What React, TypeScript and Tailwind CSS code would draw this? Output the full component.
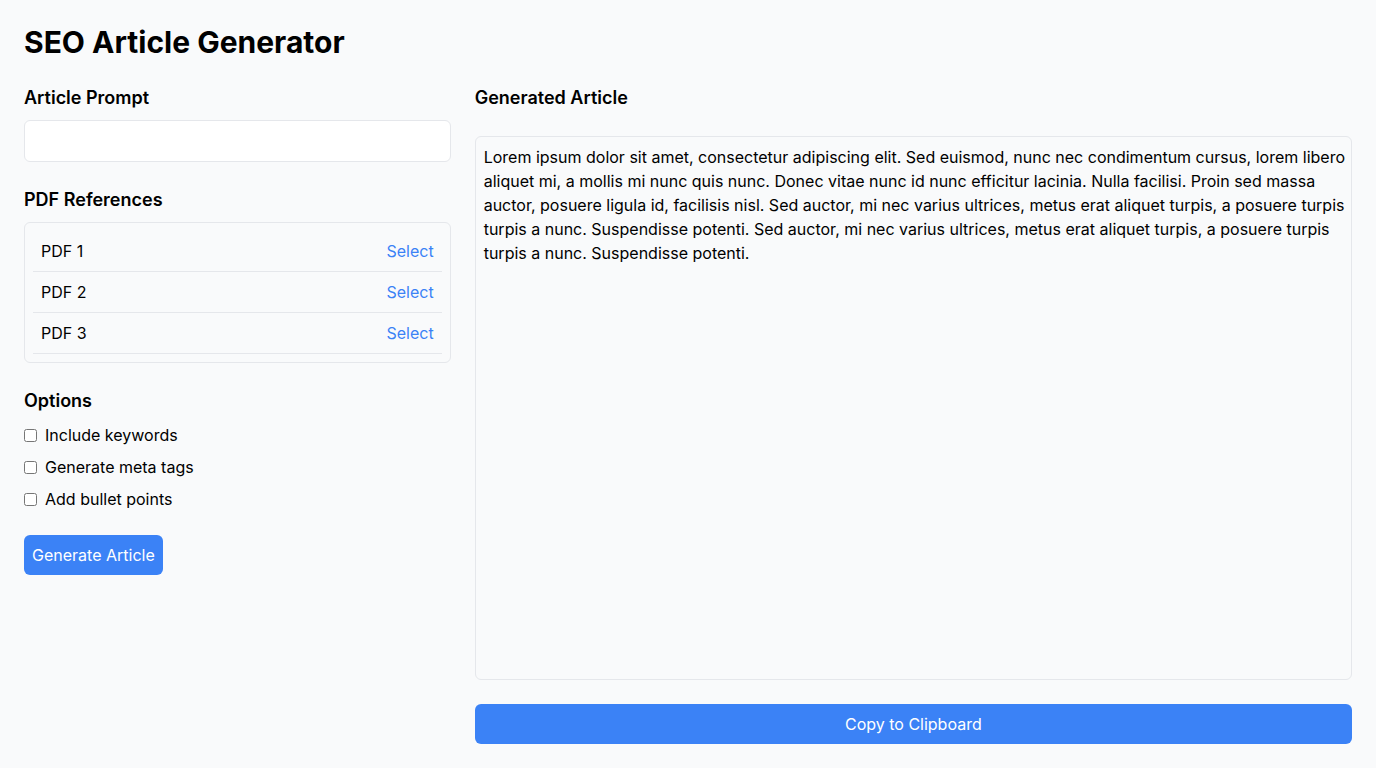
import { useState } from 'react'

const article =
  'Lorem ipsum dolor sit amet, consectetur adipiscing elit. Sed euismod, nunc nec condimentum cursus, lorem libero aliquet mi, a mollis mi nunc quis nunc. Donec vitae nunc id nunc efficitur lacinia. Nulla facilisi. Proin sed massa auctor, posuere ligula id, facilisis nisl. Sed auctor, mi nec varius ultrices, metus erat aliquet turpis, a posuere turpis turpis a nunc. Suspendisse potenti. Sed auctor, mi nec varius ultrices, metus erat aliquet turpis, a posuere turpis turpis a nunc. Suspendisse potenti.'

const pdfs = ['PDF 1', 'PDF 2', 'PDF 3']
const options = ['Include keywords', 'Generate meta tags', 'Add bullet points']

export default function App() {
  const [prompt, setPrompt] = useState('')

  return (
    <div className="h-screen flex flex-col p-6 bg-[#f9fafb] text-black font-['Inter',sans-serif]">
      <h1 className="text-3xl font-bold mb-6">SEO Article Generator</h1>

      <div className="grid grid-cols-3 gap-6 flex-1 min-h-0">
        {/* Left column */}
        <div className="flex flex-col">
          <h2 className="text-lg font-semibold mb-2">Article Prompt</h2>
          <input
            value={prompt}
            onChange={(e) => setPrompt(e.target.value)}
            className="w-full px-3 py-2 bg-white border border-[#e5e7eb] rounded-md outline-none"
          />

          <h2 className="text-lg font-semibold mt-6 mb-2">PDF References</h2>
          <ul className="border border-[#e5e7eb] rounded-md p-2">
            {pdfs.map((p) => (
              <li key={p} className="flex items-center justify-between px-2 py-2 border-b border-[#e5e7eb]">
                <span>{p}</span>
                <button className="text-[#3b82f6]">Select</button>
              </li>
            ))}
          </ul>

          <h2 className="text-lg font-semibold mt-6 mb-2">Options</h2>
          <div className="flex flex-col gap-2">
            {options.map((o) => (
              <label key={o} className="flex items-center">
                <input type="checkbox" className="mr-2 size-[13px]" />
                <span>{o}</span>
              </label>
            ))}
          </div>

          <div className="mt-6">
            <button className="px-2 py-2 bg-[#3b82f6] text-white rounded-md">Generate Article</button>
          </div>
        </div>

        {/* Right column */}
        <div className="col-span-2 flex flex-col min-h-0">
          <h2 className="text-lg font-semibold mb-6">Generated Article</h2>
          <div className="flex-1 w-full py-2 pl-2 pr-0 bg-[#f9fafb] border border-[#e5e7eb] rounded-md overflow-auto">
            {article}
          </div>
          <button className="mt-6 w-full py-2 bg-[#3b82f6] text-white rounded-md">Copy to Clipboard</button>
        </div>
      </div>
    </div>
  )
}
